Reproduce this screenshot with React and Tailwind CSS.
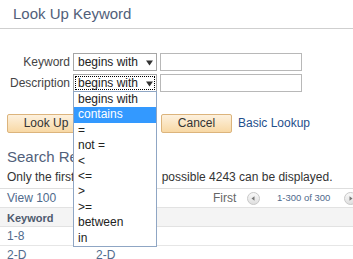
import React from "react";

const OPTIONS = ["begins with", "contains", "=", "not =", "<", "<=", ">", ">=", "between", "in"];

/* small ▼ used inside the selects */
function Caret() {
  return (
    <svg className="absolute left-[72px] top-[6px]" width="7" height="6" viewBox="0 0 7 6">
      <path d="M0 0.5h7L3.5 5.5z" fill="#333" />
    </svg>
  );
}

function PageBtn({ dir }) {
  return (
    <svg width="13" height="13" viewBox="0 0 13 13" className="shrink-0">
      <defs>
        <linearGradient id={"g" + dir} x1="0" y1="0" x2="0" y2="1">
          <stop offset="0" stopColor="#fafafa" />
          <stop offset="1" stopColor="#dedede" />
        </linearGradient>
      </defs>
      <circle cx="6.5" cy="6.5" r="6" fill={`url(#g${dir})`} stroke="#c8c8c8" />
      {dir === "prev" ? (
        <path d="M4.5 6.5L7.5 4.3v4.4z" fill="#777" />
      ) : (
        <path d="M8.5 6.5L5.5 4.3v4.4z" fill="#777" />
      )}
    </svg>
  );
}

function Select({ focused, open }) {
  return (
    <div className="relative h-[18px] w-[84px] border border-[#a6a6a6] bg-white">
      <span className="absolute left-[4px] top-0 text-[12px] leading-[16px] text-[#222]">begins with</span>
      <Caret />
      {focused && <span className="absolute inset-[1px] border border-dotted border-black" />}
      {open && (
        <div className="absolute left-[-1px] top-[16px] z-10 w-[84px] border border-[#8fa6c4] bg-white">
          {OPTIONS.map((o) => (
            <div
              key={o}
              className={
                "h-[15.4px] pl-[4px] text-[12px] leading-[15.4px] " +
                (o === "contains" ? "bg-[#3399ff] text-white" : "text-[#222]")
              }
            >
              {o}
            </div>
          ))}
        </div>
      )}
    </div>
  );
}

export default function App() {
  return (
    <div
      className="relative h-[259px] w-[353px] overflow-hidden bg-white text-[#333]"
      style={{ fontFamily: '"Liberation Sans", Arial, sans-serif' }}
    >
      {/* Header */}
      <div className="box-border h-[29px] border-b border-[#cfcfcf] pl-[13px] pt-[5px] text-[15px] leading-[18px] text-[#51607a]">
        Look Up Keyword
      </div>

      {/* Search criteria */}
      <div className="mt-[24px] flex items-center">
        <div className="w-[73px] pr-[3px] text-right text-[12px] leading-[18px] text-[#444]">Keyword</div>
        <Select />
        <div className="ml-[3px] h-[18px] w-[142px] border border-[#b8b8b8] bg-white" />
      </div>
      <div className="mt-[3px] flex items-center">
        <div className="w-[73px] pr-[3px] text-right text-[12px] leading-[18px] text-[#444]">Description</div>
        <Select focused open />
        <div className="ml-[3px] h-[18px] w-[142px] border border-[#b8b8b8] bg-white" />
      </div>

      {/* Buttons */}
      <div className="mt-[22px] flex items-center">
        <button className="ml-[7px] h-[19px] w-[78px] rounded-[2px] border border-[#dcb47c] bg-gradient-to-b from-[#fdf1de] to-[#f8d8a4] text-[12px] leading-[17px] text-[#333]">
          Look Up
        </button>
        <button className="ml-[76px] h-[19px] w-[71px] rounded-[2px] border border-[#dcb47c] bg-gradient-to-b from-[#fdf1de] to-[#f8d8a4] text-[12px] leading-[17px] text-[#333]">
          Cancel
        </button>
        <span className="ml-[6px] text-[12px] leading-[19px] text-[#1f4f8c]">Basic Lookup</span>
      </div>

      {/* Results */}
      <div className="mt-[15px] pl-[7px] text-[15px] leading-[18px] text-[#51607a]">Search Results</div>
      <div className="mt-[4px] whitespace-nowrap pl-[7px] text-[12px] leading-[14px] text-[#333]">
        Only the first <span className="inline-block w-[84px]">300 of a</span>possible 4243 can be displayed.
      </div>

      <div className="mt-[4px] border-t border-[#dedede]">
        <div className="flex h-[18px] items-center whitespace-nowrap">
          <span className="w-[213px] shrink-0 pl-[7px] text-[12px] text-[#4f6a8c]">View 100</span>
          <span className="w-[24px] shrink-0 text-[12px] text-[#666]">First</span>
          <span className="ml-[10px] flex">
            <PageBtn dir="prev" />
          </span>
          <span className="ml-[17px] shrink-0 text-[9.5px] text-[#4f6a8c]">1-300 of 300</span>
          <span className="ml-[14px] flex">
            <PageBtn dir="next" />
          </span>
        </div>
        <div className="flex h-[20px] items-center border-t border-b border-[#e2e2e2] bg-[#f4f4f4] pt-[2px] text-[11px] font-bold text-[#4e5a6e]">
          <span className="w-[90px] pl-[7px]">Keyword</span>
          <span className="pl-[6px]">Description</span>
        </div>
        {[
          ["1-8", "1-8"],
          ["2-D", "2-D"],
        ].map(([k, d]) => (
          <div key={k} className="flex h-[19px] items-center border-b border-[#e6e6e6] text-[12px] text-[#4f6a8c]">
            <span className="w-[90px] pl-[7px]">{k}</span>
            <span className="pl-[6px]">{d}</span>
          </div>
        ))}
      </div>
    </div>
  );
}
